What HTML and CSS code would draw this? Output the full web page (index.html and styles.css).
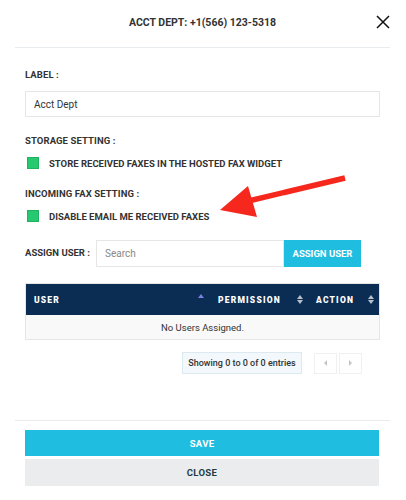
FILE: index.html
```html
<!DOCTYPE html>
<html lang="en">

<head>
    <title>Edit Fax Number</title>
    <meta name="viewport" content="width=device-width, initial-scale=1" />
    <link rel="stylesheet" href="styles.css">
</head>

<body>
    <div class="modal">
        <div class="modal-header">
            <span></span>
            <h1 class="modal-title">ACCT DEPT: +1(566) 123-5318</h1>
            <button class="close-btn" aria-label="Close">
                <svg width="14" height="14" viewBox="0 0 14 14">
                    <path d="M1 1 L13 13 M13 1 L1 13" stroke="#111" stroke-width="1.5" fill="none" />
                </svg>
            </button>
        </div>

        <div class="modal-body">
            <div class="field-label first">LABEL :</div>
            <input class="text-input" type="text" value="Acct Dept" />

            <div class="field-label section">STORAGE SETTING :</div>
            <label class="check-row">
                <span class="check-box"></span>
                STORE RECEIVED FAXES IN THE HOSTED FAX WIDGET
            </label>

            <div class="field-label section">INCOMING FAX SETTING :</div>
            <label class="check-row">
                <span class="check-box"></span>
                DISABLE EMAIL ME RECEIVED FAXES
            </label>

            <div class="assign-row">
                <div class="assign-label">ASSIGN USER :</div>
                <input class="search-input" type="text" placeholder="Search" />
                <button class="assign-btn">ASSIGN USER</button>
            </div>

            <table class="user-table">
                <thead>
                    <tr>
                        <th class="col-user">USER <span class="sort sort-asc"></span></th>
                        <th class="col-perm">PERMISSION <span class="sort"></span></th>
                        <th class="col-action">ACTION <span class="sort"></span></th>
                    </tr>
                </thead>
                <tbody>
                    <tr>
                        <td colspan="3">No Users Assigned.</td>
                    </tr>
                </tbody>
            </table>

            <div class="table-foot">
                <div class="table-info">Showing 0 to 0 of 0 entries</div>
                <div class="pager">
                    <button class="page-btn"><span class="tri-left"></span></button>
                    <button class="page-btn"><span class="tri-right"></span></button>
                </div>
            </div>
        </div>

        <div class="modal-footer">
            <button class="btn btn-save">SAVE</button>
            <button class="btn btn-close">CLOSE</button>
        </div>
    </div>

    <svg class="callout-arrow" width="406" height="500" viewBox="0 0 406 500">
        <line x1="345" y1="178" x2="240" y2="203" stroke="#f6271c" stroke-width="5.5" />
        <polygon points="220,210 248,186 257,217" fill="#f6271c" />
    </svg>
</body>

</html>
```

FILE: styles.css
```css
body {
    margin: 0;
    font-family: Roboto, "Liberation Sans", sans-serif;
    color: #333;
    background: #fff;
}

.modal {
    margin: 0 16px 0 15px;
}

.modal-header {
    display: grid;
    grid-template-columns: 1fr auto 1fr;
    align-items: center;
    height: 47px;
    border-bottom: 1px solid #e9ecef;
}

.modal-title {
    margin: 0;
    font-size: 10.5px;
    font-weight: 700;
    color: #333;
    padding-bottom: 2px;
}

.close-btn {
    justify-self: end;
    background: none;
    border: 0;
    padding: 0;
    width: 14px;
    height: 14px;
    margin-bottom: 3px;
}

.modal-body {
    padding: 0 10px 46px;
}

.field-label {
    font-size: 9.5px;
    font-weight: 700;
    line-height: 14px;
    letter-spacing: 0.1px;
}

.field-label.first {
    margin-top: 20px;
    margin-bottom: 9px;
}

.field-label.section {
    margin-top: 17px;
}

.text-input {
    display: block;
    box-sizing: border-box;
    width: 100%;
    height: 26px;
    margin: 0;
    padding: 0 8px;
    border: 1px solid #e6e6e6;
    font-family: inherit;
    font-size: 10px;
    color: #333;
}

.check-row {
    display: flex;
    align-items: center;
    height: 14px;
    margin-top: 8px;
    font-size: 9.5px;
    font-weight: 700;
}

.check-box {
    width: 12px;
    height: 12px;
    margin: 0 10px 0 2px;
    background: #26c96f;
    border: 0.5px solid #1fb35f;
    box-sizing: border-box;
}

.assign-row {
    display: flex;
    align-items: center;
    margin-top: 17px;
}

.assign-label {
    width: 71px;
    font-size: 9.5px;
    font-weight: 700;
    margin-bottom: 3px;
}

.search-input {
    box-sizing: border-box;
    width: 188px;
    height: 27px;
    margin: 0;
    padding: 0 8px;
    border: 1px solid #e6e6e6;
    font-family: inherit;
    font-size: 10px;
}

.search-input::placeholder {
    color: #888;
}

.assign-btn {
    width: 77px;
    height: 27px;
    margin: 0;
    border: 0;
    background: #1fbde0;
    color: #fff;
    font-family: inherit;
    font-size: 9.5px;
    font-weight: 700;
}

.user-table {
    width: 100%;
    margin-top: 16px;
    border-collapse: collapse;
    border: 1px solid #e6e6e6;
}

.user-table th {
    position: relative;
    height: 31px;
    padding: 0 8px;
    background: #0b2d54;
    color: #fff;
    text-align: left;
    font-size: 8.5px;
    font-weight: 900;
    letter-spacing: 1.2px;
}

.col-user {
    width: 168px;
}

.col-perm {
    width: 82px;
}

.sort {
    position: absolute;
    right: 5px;
    top: 11px;
    width: 6px;
    height: 9px;
}

.sort::before,
.sort::after {
    content: "";
    position: absolute;
    left: 0;
    border-left: 3px solid transparent;
    border-right: 3px solid transparent;
}

.sort::before {
    top: 0;
    border-bottom: 4px solid #b9c2cc;
}

.sort::after {
    bottom: 0;
    border-top: 4px solid #b9c2cc;
}

.sort-asc {
    right: 6px;
    top: 10px;
}

.sort-asc::before {
    border-bottom-color: #7b7fe0;
}

.sort-asc::after {
    display: none;
}

.user-table td {
    height: 24px;
    padding: 0;
    background: #f9f9f9;
    text-align: center;
    font-size: 9.5px;
    color: #333;
}

.table-foot {
    display: flex;
    align-items: center;
    margin-top: 12px;
    padding-left: 157px;
}

.table-info {
    box-sizing: border-box;
    width: 120px;
    height: 22px;
    line-height: 20px;
    border: 1px solid #dde9f1;
    background: #f3f8fc;
    text-align: center;
    font-size: 9px;
    font-weight: 500;
}

.pager {
    display: flex;
    gap: 2px;
    margin-left: 12px;
}

.page-btn {
    display: flex;
    align-items: center;
    justify-content: center;
    width: 23px;
    height: 21px;
    margin: 0;
    padding: 0;
    border: 1px solid #f0f0f0;
    background: #fff;
}

.tri-left {
    border-top: 3px solid transparent;
    border-bottom: 3px solid transparent;
    border-right: 3px solid #c4c4c4;
}

.tri-right {
    border-top: 3px solid transparent;
    border-bottom: 3px solid transparent;
    border-left: 3px solid #c4c4c4;
}

.modal-footer {
    border-top: 1px solid #e9ecef;
    padding: 9px 11px 0 10px;
}

.btn {
    display: block;
    width: 100%;
    height: 26px;
    margin: 0 0 3px;
    border: 0;
    font-family: inherit;
    font-size: 9.5px;
    font-weight: 700;
    letter-spacing: 0.3px;
}

.btn-save {
    background: #1fbde0;
    color: #fff;
}

.btn-close {
    height: 27px;
    background: #ebeced;
    color: #1e3c45;
}

.callout-arrow {
    position: absolute;
    left: 0;
    top: 0;
    pointer-events: none;
}
```
